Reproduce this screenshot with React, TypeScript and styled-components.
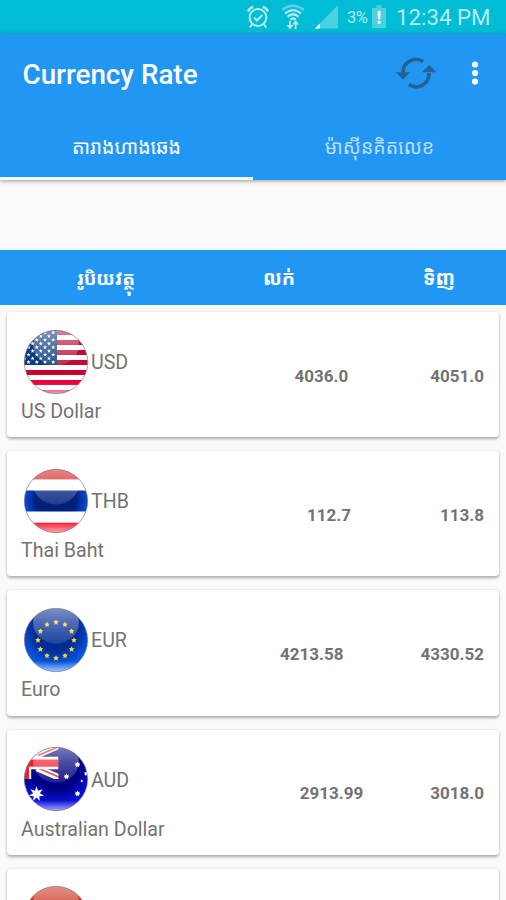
import React from 'react';
import styled, { createGlobalStyle } from 'styled-components';

const GlobalStyle = createGlobalStyle`
  * { box-sizing: border-box; }
  body { margin: 0; background: #fafafa; font-family: Roboto, 'Noto Sans Khmer', 'Noto Sans', sans-serif; }
`;

const Screen = styled.div`
  width: 506px;
  height: 900px;
  overflow: hidden;
  display: flex;
  flex-direction: column;
  background: #fafafa;
`;

const StatusBar = styled.div`
  height: 34px;
  flex: none;
  display: flex;
  align-items: center;
  justify-content: flex-end;
  padding-right: 16px;
  background: #00bcd4;
  color: #b5ebf2;
`;

const StatusIcon = styled.svg<{ $gap: number }>`
  flex: none;
  margin-right: ${(p) => p.$gap}px;
  margin-bottom: 1px;
`;

const BatteryLevel = styled.span`
  font-size: 16.5px;
  width: 22px;
  margin-right: 3px;
  letter-spacing: -0.6px;
  white-space: nowrap;
`;

const Clock = styled.span`
  font-size: 22.3px;
  line-height: 34px;
  width: 94px;
  white-space: nowrap;
`;

const AppBar = styled.header`
  flex: none;
  height: 146px;
  background: #2196f3;
  box-shadow: 0 1px 4px rgba(0, 0, 0, 0.4);
  display: flex;
  flex-direction: column;
`;

const Toolbar = styled.div`
  height: 79px;
  display: flex;
  align-items: center;
  padding: 0 24px 0 22.5px;
`;

const Title = styled.h1`
  margin: 0;
  padding-top: 2px;
  flex: 1;
  font-size: 27.8px;
  font-weight: 500;
  color: #fff;
`;

const ToolIcon = styled.svg<{ $gap?: number }>`
  flex: none;
  margin-right: ${(p) => p.$gap ?? 0}px;
  margin-bottom: 1px;
`;

const Tabs = styled.nav`
  flex: 1;
  display: grid;
  grid-template-columns: 1fr 1fr;
`;

const Tab = styled.div<{ $active?: boolean }>`
  display: flex;
  justify-content: center;
  padding-top: 20px;
  font-size: 19.5px;
  line-height: 30px;
  color: ${(p) => (p.$active ? '#fff' : '#bcdffb')};
  border-bottom: 3px solid ${(p) => (p.$active ? '#f4faff' : 'transparent')};
`;

const TableHead = styled.div`
  flex: none;
  margin-top: 70px;
  height: 55px;
  display: grid;
  grid-template-columns: 212px 134px 186px;
  align-items: center;
  background: #2196f3;
  color: #fff;
  font-size: 19.5px;
  font-weight: 700;
  text-align: center;
`;

const HeadCell = styled.span<{ $compact?: boolean }>`
  font-size: ${(p) => (p.$compact ? 18.6 : 19.5)}px;
`;

const CardList = styled.main`
  padding: 7px 7px 0;
  display: flex;
  flex-direction: column;
  gap: 14px;
`;

const Card = styled.article`
  flex: none;
  width: 492px;
  height: 125.2px;
  background: #fff;
  border-radius: 4px;
  box-shadow: 0 1.5px 3px rgba(0, 0, 0, 0.32);
  display: flex;
  align-items: center;
  padding: 0 15px 0 14px;
  color: #737373;
`;

const Currency = styled.div`
  flex: 1;
  height: 100%;
  padding-top: 16.5px;
`;

const CodeRow = styled.div`
  display: flex;
  align-items: center;
  gap: 2px;
  height: 66px;
  padding-left: 2px;
  font-size: 19.6px;
`;

const Code = styled.span`
  padding-top: 2px;
`;

const Name = styled.div`
  font-size: 19.6px;
  line-height: 23px;
  margin-top: 5.5px;
`;

const Rate = styled.span<{ $gap?: number }>`
  margin-right: ${(p) => p.$gap ?? 0}px;
  padding-top: 2px;
  font-size: 17px;
  font-weight: 700;
`;

function star(cx: number, cy: number, r: number, points = 5, inner = 0.42) {
  return Array.from({ length: points * 2 }, (_, i) => {
    const a = (Math.PI * i) / points - Math.PI / 2;
    const d = i % 2 ? r * inner : r;
    return `${(cx + d * Math.cos(a)).toFixed(2)},${(cy + d * Math.sin(a)).toFixed(2)}`;
  }).join(' ');
}

function UsFlag() {
  const stars: React.ReactNode[] = [];
  for (let row = 0; row < 9; row++) {
    const y = 2.5 + row * 3.7;
    for (let x = row % 2 ? 0.4 : 4.6; x < 32; x += 8.2) {
      stars.push(<polygon key={`${row}-${x}`} points={star(x, y, 2.2)} fill="#fff" />);
    }
  }
  return (
    <>
      <rect width="64" height="64" fill="#fff" />
      {[0, 1, 2, 3, 4, 5, 6].map((i) => (
        <rect key={i} y={i * 10} width="64" height="5" fill={i < 4 ? '#c00a34' : i === 4 ? '#c9002f' : '#ea003f'} />
      ))}
      <rect width="33" height="35" fill="#0b3a7c" />
      {stars}
    </>
  );
}

function ThaiFlag() {
  return (
    <>
      <rect width="64" height="64" fill="#fff" />
      <rect width="64" height="10.4" fill="#d31818" />
      <rect y="21.5" width="64" height="21" fill="url(#navy)" />
      <rect y="53.7" width="64" height="11" fill="#f5172b" />
    </>
  );
}

function EuFlag() {
  return (
    <>
      <rect width="64" height="64" fill="url(#euBlue)" />
      {Array.from({ length: 12 }, (_, i) => {
        const a = (i * Math.PI) / 6;
        return (
          <polygon key={i} points={star(32 + 18 * Math.sin(a), 32.2 - 18 * Math.cos(a), 3, 5, 0.48)} fill="#ffd52e" />
        );
      })}
    </>
  );
}

function AuFlag() {
  return (
    <>
      <rect width="64" height="64" fill="url(#auBlue)" />
      <path d="M13 21L36 31M9 10L36-2" stroke="#fff" strokeWidth="6.4" />
      <path d="M15 21.5L36 30.5M14 8.5L36-1" stroke="#f01828" strokeWidth="1.7" />
      <path d="M0 9.7H34.5V22.3H7.2V32H0Z" fill="#fff" />
      <path d="M0 12.4H34.5V19.8H5V32H0Z" fill="#f51d2c" />
      <rect x="34.5" width="8" height="36" fill="#00007c" />
      <rect y="32" width="42" height="6" fill="#00008c" />
      <g fill="#fff">
        <polygon points={star(12.5, 47, 7.8, 7, 0.45)} />
        <polygon points={star(53.5, 17.5, 3, 7, 0.6)} />
        <polygon points={star(42.5, 29.5, 2.9, 7, 0.6)} />
        <polygon points={star(62.3, 26.6, 2.4, 7, 0.6)} />
        <polygon points={star(57.8, 34, 1.7)} />
        <polygon points={star(53.5, 46.5, 3, 7, 0.6)} />
      </g>
    </>
  );
}

function RedFlag() {
  return <rect width="64" height="64" fill="#cc2a18" />;
}

function FlagDefs() {
  return (
    <svg width="0" height="0" display="block">
      <defs>
        <clipPath id="disc"><circle cx="32" cy="32" r="31.6" /></clipPath>
        <linearGradient id="gloss" x1="0" y1="0" x2="0" y2="1">
          <stop offset="0" stopColor="#fff" stopOpacity=".54" />
          <stop offset=".5" stopColor="#fff" stopOpacity=".3" />
          <stop offset="1" stopColor="#fff" stopOpacity=".12" />
        </linearGradient>
        <linearGradient id="glow" x1="0" y1="0" x2="0" y2="1">
          <stop offset=".83" stopColor="#fff" stopOpacity="0" />
          <stop offset="1" stopColor="#fff" stopOpacity=".65" />
        </linearGradient>
        <radialGradient id="navy" gradientUnits="userSpaceOnUse" cx="32" cy="30" r="33">
          <stop offset=".6" stopColor="#00207c" />
          <stop offset="1" stopColor="#0a50e0" />
        </radialGradient>
        <radialGradient id="euBlue" gradientUnits="userSpaceOnUse" cx="32" cy="20" r="44">
          <stop offset=".5" stopColor="#002c94" />
          <stop offset="1" stopColor="#0868ff" />
        </radialGradient>
        <radialGradient id="auBlue" gradientUnits="userSpaceOnUse" cx="32" cy="18" r="46">
          <stop offset=".5" stopColor="#00007c" />
          <stop offset="1" stopColor="#0b14ff" />
        </radialGradient>
      </defs>
    </svg>
  );
}

function Flag({ children }: { children: React.ReactNode }) {
  return (
    <svg width="66" height="66" viewBox="-1 -1 66 66">
      <g clipPath="url(#disc)">
        {children}
        <ellipse cx="32" cy="15" rx="23" ry="20.5" fill="url(#gloss)" />
        <rect width="64" height="64" fill="url(#glow)" />
      </g>
      <circle cx="32" cy="32" r="31.7" fill="none" stroke="#777" strokeOpacity=".65" strokeWidth="1" />
    </svg>
  );
}

const rates = [
  { code: 'USD', name: 'US Dollar', sell: '4036.0', buy: '4051.0', gap: 82, flag: <UsFlag /> },
  { code: 'THB', name: 'Thai Baht', sell: '112.7', buy: '113.8', gap: 89, flag: <ThaiFlag /> },
  { code: 'EUR', name: 'Euro', sell: '4213.58', buy: '4330.52', gap: 77, flag: <EuFlag /> },
  { code: 'AUD', name: 'Australian Dollar', sell: '2913.99', buy: '3018.0', gap: 67, flag: <AuFlag /> },
  { code: '', name: '', sell: '', buy: '', gap: 0, flag: <RedFlag /> },
];

export default function App() {
  return (
    <Screen>
      <GlobalStyle />
      <FlagDefs />
      <StatusBar>
        <StatusIcon $gap={12} width="22" height="24" viewBox="0 0 22 24" fill="none" stroke="currentColor">
          <circle cx="11" cy="12.5" r="8.4" strokeWidth="2" />
          <path d="M7 12.5l3 3 5.3-5.5" strokeWidth="2" />
          <path d="M1.2 6.6Q2 3 6.3 2M20.8 6.6Q20 3 15.7 2" strokeWidth="2.6" />
          <path d="M5 19.5l-2.2 3M17 19.5l2.2 3" strokeWidth="2" />
        </StatusIcon>
        <StatusIcon $gap={10} width="24" height="26" viewBox="0 0 24 26" fill="none" stroke="currentColor" strokeWidth="2.3">
          <path d="M1.2 6Q12-2.5 22.8 6" opacity=".5" />
          <path d="M4 9.4Q12 2.8 20 9.4M6.6 12.7Q12 7.8 17.4 12.7M9.4 15.6Q12 13.4 14.6 15.6" />
          <path d="M9 17v5M14.6 25v-6" strokeWidth="1.8" />
          <path d="M5.6 21h6.8L9 25.5zM11.2 20.5H18L14.6 16z" fill="currentColor" stroke="none" />
        </StatusIcon>
        <StatusIcon $gap={9} width="23" height="24" viewBox="0 0 23 24">
          <path d="M23 0V23.5H0z" fill="#4dd0e1" />
          <path d="M4.8 18.6v4.9H0z" fill="#fff" />
        </StatusIcon>
        <BatteryLevel>3%</BatteryLevel>
        <StatusIcon $gap={10} width="14" height="23" viewBox="0 0 14 23">
          <path d="M4.5 0h5v3H14v20H0V3h4.5z" fill="#4dd0e1" />
          <path d="M5.5 6h3.2l-.5 8.6H6zM5.7 16h2.8v2.8H5.7z" fill="#fff" />
        </StatusIcon>
        <Clock>12:34 PM</Clock>
      </StatusBar>
      <AppBar>
        <Toolbar>
          <Title>Currency Rate</Title>
          <ToolIcon $gap={32} width="40" height="32" viewBox="0 0 40 32">
            <path d="M27.2 4.6A13 13 0 0 0 7 15.8M12.8 27.6A13 13 0 0 0 33 16" fill="none" stroke="#28618f" strokeWidth="3.6" />
            <path d="M0 15.3h14.2L7 22.5zM26 15.3h14.3L33.2 8z" fill="#28618f" />
          </ToolIcon>
          <ToolIcon width="14" height="24" viewBox="0 0 14 24" fill="#fff">
            <circle cx="7" cy="3.5" r="3.1" />
            <circle cx="7" cy="12" r="3.1" />
            <circle cx="7" cy="20.5" r="3.1" />
          </ToolIcon>
        </Toolbar>
        <Tabs>
          <Tab $active>តារាងហាងឆេង</Tab>
          <Tab>ម៉ាស៊ីនគិតលេខ</Tab>
        </Tabs>
      </AppBar>
      <TableHead>
        <HeadCell $compact>រូបិយវត្ថុ</HeadCell>
        <HeadCell>លក់</HeadCell>
        <HeadCell>ទិញ</HeadCell>
      </TableHead>
      <CardList>
        {rates.map((r, i) => (
          <Card key={i}>
            <Currency>
              <CodeRow>
                <Flag>{r.flag}</Flag>
                <Code>{r.code}</Code>
              </CodeRow>
              <Name>{r.name}</Name>
            </Currency>
            <Rate $gap={r.gap}>{r.sell}</Rate>
            <Rate>{r.buy}</Rate>
          </Card>
        ))}
      </CardList>
    </Screen>
  );
}
